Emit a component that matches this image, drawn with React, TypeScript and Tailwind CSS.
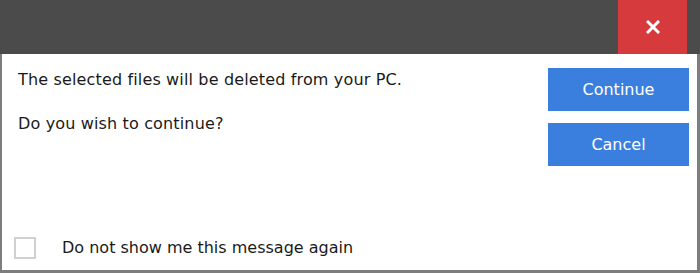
export default function App() {
  return (
    <div className="w-[700px] h-[273px] bg-white flex flex-col font-['DejaVu_Sans',Verdana,sans-serif] text-[#1a1a1a]">
      {/* title bar */}
      <div className="h-[54px] shrink-0 bg-[#4b4b4b] flex justify-end pr-[13px]">
        <button className="w-[69px] h-full bg-[#d63a3c] flex items-center justify-center text-white">
          <svg width="14" height="14" viewBox="0 0 14 14">
            <path d="M2 2 L12 12 M12 2 L2 12" stroke="#fff" strokeWidth="3" strokeLinecap="square" />
          </svg>
        </button>
      </div>
      {/* body */}
      <div className="flex-1 flex border-l-2 border-r-[3px] border-b-[3px] border-[#7d7d7d]">
        <div className="flex-1 flex flex-col pl-[12px]">
          <p className="ml-[4px] text-[16px] mt-[16px] leading-[20px] tracking-[0.15px]">The selected files will be deleted from your PC.</p>
          <p className="ml-[4px] text-[16px] mt-[24px] leading-[20px] tracking-[0.15px]">Do you wish to continue?</p>
          <label className="mt-auto mb-[11px] flex items-center">
            <span className="w-[22px] h-[22px] border-2 border-[#d0d0d0] bg-white" />
            <span className="ml-[26px] text-[16px] leading-[20px]">Do not show me this message again</span>
          </label>
        </div>
        <div className="w-[149px] flex flex-col gap-[12px] pt-[14px] pr-[8px]">
          <button className="h-[43px] bg-[#3b7fde] text-white text-[16px]">Continue</button>
          <button className="h-[43px] bg-[#3b7fde] text-white text-[16px]">Cancel</button>
        </div>
      </div>
    </div>
  );
}
